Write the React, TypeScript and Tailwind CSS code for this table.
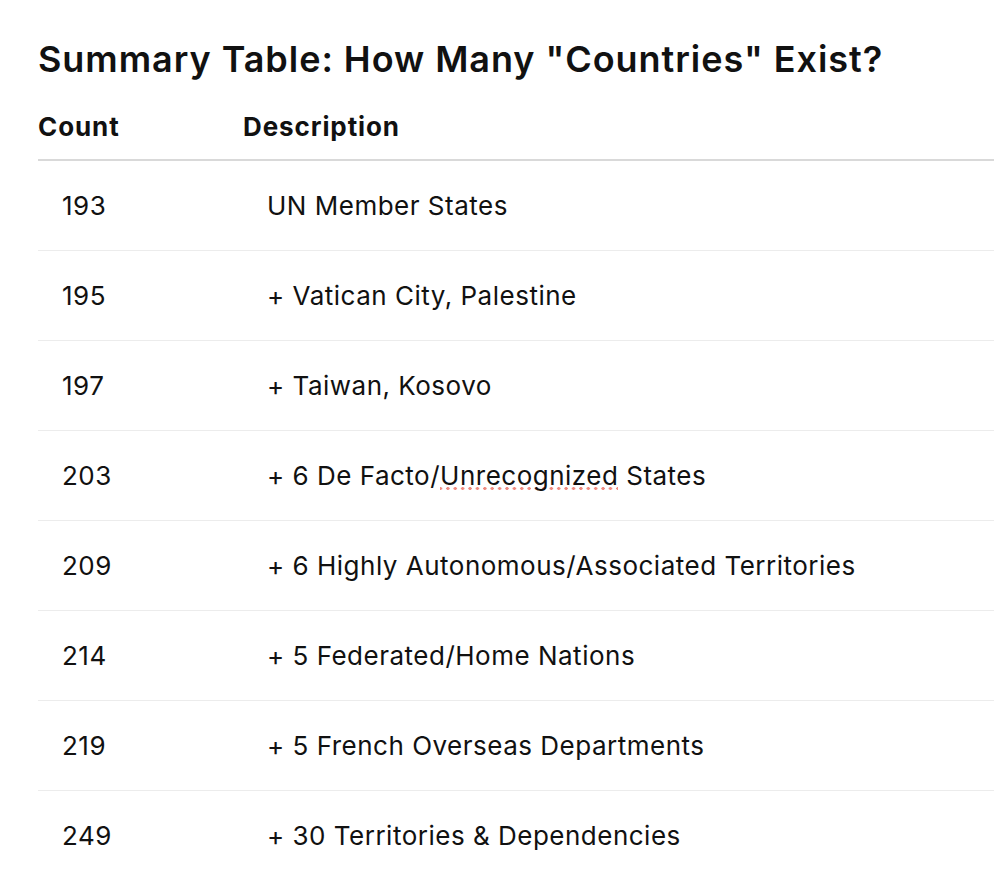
import React from 'react';

const rows: { count: string; desc: React.ReactNode }[] = [
  { count: '193', desc: 'UN Member States' },
  { count: '195', desc: '+ Vatican City, Palestine' },
  { count: '197', desc: '+ Taiwan, Kosovo' },
  {
    count: '203',
    desc: (
      <>
        + 6 De Facto/
        <span className="bg-[radial-gradient(circle,#ef8a80_1.4px,transparent_1.8px)] bg-[length:7.4px_5px] bg-repeat-x bg-bottom">
          Unrecognized
        </span>{' '}
        States
      </>
    ),
  },
  { count: '209', desc: '+ 6 Highly Autonomous/Associated Territories' },
  { count: '214', desc: '+ 5 Federated/Home Nations' },
  { count: '219', desc: '+ 5 French Overseas Departments' },
  { count: '249', desc: '+ 30 Territories & Dependencies' },
];

export default function App() {
  return (
    <div
      className="min-h-[896px] bg-white pl-[38px] pt-[38px] text-[#111] overflow-hidden"
      style={{ fontFamily: 'Inter, "Noto Sans", sans-serif' }}
    >
      <h1 className="text-[36px] leading-[43px] font-semibold tracking-[0.95px]">
        Summary Table: How Many "Countries" Exist?
      </h1>

      <div className="mt-[30px]">
        <div className="grid grid-cols-[205px_1fr] border-b-2 border-[#d9d9d9] pb-[16px] text-[26px] leading-[32px] font-bold tracking-[0.9px]">
          <div>Count</div>
          <div>Description</div>
        </div>
        {rows.map((r, i) => (
          <div
            key={r.count}
            className={
              'grid grid-cols-[205px_1fr] items-center h-[90px] text-[26px] leading-[32px] tracking-[0.5px] ' +
              (i < rows.length - 1 ? 'border-b border-[#ececec]' : '')
            }
          >
            <div className="pl-[24px]">{r.count}</div>
            <div className="pl-[24px]">{r.desc}</div>
          </div>
        ))}
      </div>
    </div>
  );
}
